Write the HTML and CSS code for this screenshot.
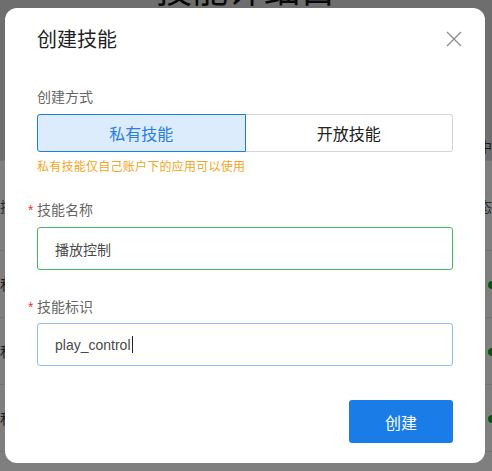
FILE: index.html
```html
<!DOCTYPE html>
<html>
<head>
    <meta charset="utf-8">
    <title>创建技能</title>
    <link rel="stylesheet" href="styles.css">
</head>
<body>
    <div class="page">
        <div class="page-head">
            <h1>技能详细目</h1>
            <div class="tabs"><span>进行中</span></div>
        </div>
        <table class="skill-table">
            <tr>
                <th>技能名称</th>
                <th class="right">状态</th>
            </tr>
            <tr>
                <td>私有技能</td>
                <td class="right"><span class="dot"></span></td>
            </tr>
            <tr>
                <td>私有技能</td>
                <td class="right"><span class="dot"></span></td>
            </tr>
            <tr>
                <td>私有技能</td>
                <td class="right"><span class="dot"></span></td>
            </tr>
        </table>
    </div>

    <div class="mask"></div>

    <div class="modal">
        <div class="modal-header">
            <h2>创建技能</h2>
            <span class="close">
                <svg width="16" height="16" viewBox="0 0 16 16">
                    <path d="M1 1 L15 15 M15 1 L1 15" stroke="#8a8c96" stroke-width="1.3" fill="none"/>
                </svg>
            </span>
        </div>

        <div class="field-label first">创建方式</div>
        <div class="segmented">
            <div class="seg-item active">私有技能</div>
            <div class="seg-item">开放技能</div>
        </div>
        <div class="hint">私有技能仅自己账户下的应用可以使用</div>

        <div class="field-label required gap-name">技能名称</div>
        <div class="input input-ok">播放控制</div>

        <div class="field-label required gap-id">技能标识</div>
        <div class="input input-focus">play_control<span class="caret"></span></div>

        <div class="footer">
            <button class="btn-primary">创建</button>
        </div>
    </div>
</body>
</html>
```

FILE: styles.css
```css
body {
    margin: 0;
    padding: 0;
    background: #ffffff;
    font-family: "Liberation Sans", "Noto Sans CJK SC", sans-serif;
}
.page-head {
    background: #dcdcdc;
    height: 160px;
    overflow: hidden;
    border-bottom: 1px solid #e6e6e6;
}
.page-head h1 {
    margin: -29px 0 0 0;
    text-align: center;
    font-size: 36px;
    line-height: 40px;
    font-weight: normal;
    color: #111;
}
.tabs {
    text-align: right;
    margin-top: 128px;
    font-size: 14px;
    line-height: 16px;
    color: #333;
}
.skill-table {
    width: 100%;
    border-collapse: collapse;
    font-size: 14px;
    color: #333;
}
.skill-table th, .skill-table td {
    border-bottom: 1px solid #e6e6e6;
    text-align: left;
    font-weight: normal;
    padding: 0;
}
.skill-table th {
    height: 89px;
    color: #555;
}
.skill-table td {
    height: 66px;
}
.skill-table .right {
    text-align: right;
}
.dot {
    display: inline-block;
    width: 8px;
    height: 8px;
    border-radius: 50%;
    background: #19a81e;
    margin-right: -4px;
}
.mask {
    position: fixed;
    left: 0;
    top: 0;
    right: 0;
    bottom: 0;
    background: rgba(0, 0, 0, 0.5);
}
.modal {
    position: fixed;
    left: 5px;
    top: 8px;
    width: 480px;
    box-sizing: border-box;
    padding: 20px 32px 20px 32px;
    background: #ffffff;
    border-radius: 12px;
    display: flex;
    flex-direction: column;
}
.modal-header {
    display: flex;
    justify-content: space-between;
    align-items: center;
    height: 24px;
}
.modal-header h2 {
    margin: 0;
    font-size: 20px;
    line-height: 24px;
    font-weight: normal;
    color: #1f1f1f;
}
.close {
    display: flex;
    margin-right: -9px;
    margin-top: -2px;
}
.field-label {
    font-size: 14px;
    line-height: 20px;
    color: #666666;
    display: flex;
}
.field-label.first {
    margin-top: 35px;
}
.field-label.gap-name {
    margin-top: 25px;
}
.field-label.gap-id {
    margin-top: 27px;
}
.required::before {
    content: "*";
    color: #f23030;
    width: 9px;
    margin-left: -9px;
    font-size: 14px;
}
.segmented {
    display: flex;
    margin-top: 7px;
    height: 38px;
}
.seg-item {
    flex: 1;
    display: flex;
    align-items: center;
    justify-content: center;
    font-size: 16px;
    color: #222222;
    border: 1px solid #d4d5dc;
    border-left: none;
    border-radius: 0 3px 3px 0;
}
.seg-item.active {
    background: #ddecfc;
    border: 1px solid #1a7ce6;
    border-radius: 3px 0 0 3px;
    color: #2a7ee0;
}
.hint {
    margin-top: 7px;
    font-size: 12px;
    line-height: 16px;
    letter-spacing: 0.25px;
    color: #f5a623;
}
.input {
    margin-top: 7px;
    height: 43px;
    box-sizing: border-box;
    border: 1px solid #d4d5dc;
    border-radius: 3px;
    padding-left: 17px;
    display: flex;
    align-items: center;
    font-size: 14px;
    color: #4a4a4a;
}
.input-ok {
    border-color: #3fbb63;
}
.input-focus {
    margin-top: 6px;
    border-color: #8cc1f2;
}
.caret {
    display: inline-block;
    width: 1px;
    height: 17px;
    background: #222;
    margin-left: 1px;
}
.footer {
    display: flex;
    justify-content: flex-end;
    margin-top: 34px;
}
.btn-primary {
    width: 104px;
    height: 43px;
    border: none;
    border-radius: 3px;
    background: #1a7ce6;
    color: #ffffff;
    font-size: 16px;
    font-family: "Liberation Sans", "Noto Sans CJK SC", sans-serif;
}
```
